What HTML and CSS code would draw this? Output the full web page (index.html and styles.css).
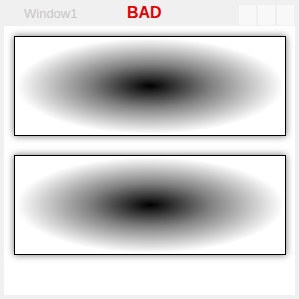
FILE: index.html
```html
<!DOCTYPE html>
<html lang="en">
<head>
    <meta charset="UTF-8">
    <title>Window1</title>
    <link rel="stylesheet" href="styles.css">
</head>
<body>
    <div class="window">
        <div class="title-bar">
            <span class="title">Window1</span>
            <span class="status">BAD</span>
            <div class="controls">
                <span class="ctl"></span>
                <span class="ctl"></span>
                <span class="ctl"></span>
            </div>
        </div>
        <div class="client">
            <div class="panel"></div>
            <div class="panel"></div>
        </div>
    </div>
</body>
</html>
```

FILE: styles.css
```css
* {
    margin: 0;
    padding: 0;
    box-sizing: border-box;
}

body {
    background: #f0f0f0;
    font-family: "Liberation Sans", Arial, sans-serif;
}

.window {
    width: 299px;
    height: 299px;
    display: flex;
    flex-direction: column;
}

/* Title bar */
.title-bar {
    height: 26px;
    display: flex;
    align-items: center;
    position: relative;
}

.title {
    margin-left: 24px;
    font-size: 13px;
    color: #c6c6c6;
}

.status {
    position: absolute;
    left: 127px;
    top: 4px;
    font-size: 16px;
    font-weight: bold;
    color: #e00000;
}

.controls {
    margin-left: auto;
    margin-right: 5px;
    display: flex;
    gap: 2px;
    align-self: flex-start;
    margin-top: 5px;
}

.ctl {
    width: 17px;
    height: 20px;
    background: #f8f8f8;
}

/* Client area */
.client {
    background: #ffffff;
    margin: 0 4px 4px 4px;
    flex: 1;
    padding: 10px 9px 0 10px;
    display: flex;
    flex-direction: column;
    gap: 19px;
}

.panel {
    height: 100px;
    border: 1px solid #000;
    box-shadow: 0 0 7px rgba(0, 0, 0, 0.55);
    background: radial-gradient(ellipse 134px 48px at 50% 50%, #000 0%, #808080 45%, #ffffff 100%);
}
```
